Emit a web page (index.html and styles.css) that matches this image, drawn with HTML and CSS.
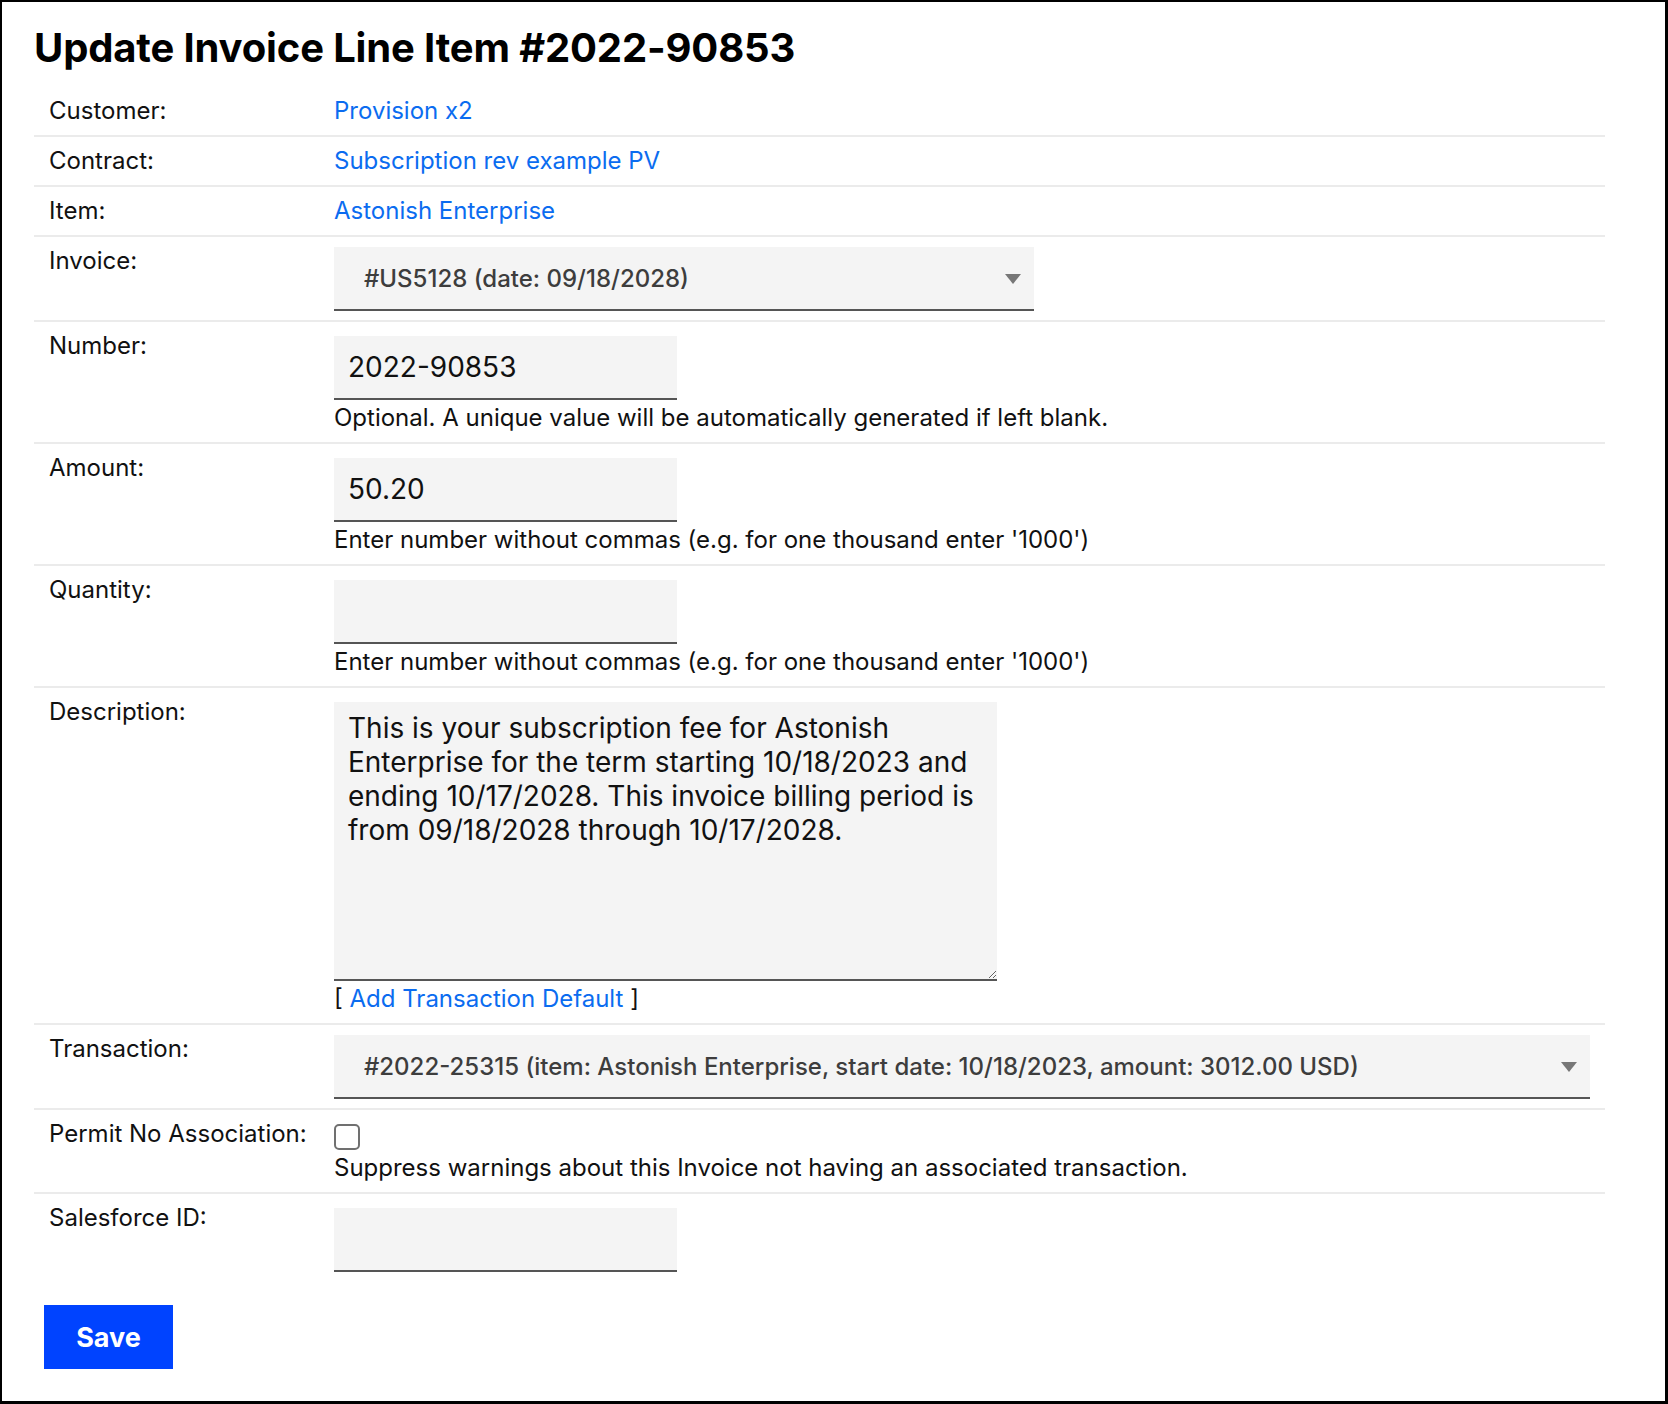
FILE: index.html
```html
<!DOCTYPE html>
<html lang="en">
<head>
    <meta charset="UTF-8">
    <meta name="viewport" content="width=device-width, initial-scale=1.0">
    <title>Update Invoice Line Item #2022-90853</title>
    <link rel="stylesheet" href="styles.css">
</head>
<body>
    <div class="page">
        <h1>Update Invoice Line Item #2022-90853</h1>

        <form class="edit-form">
            <div class="form-row">
                <div class="form-label">Customer:</div>
                <div class="form-value"><a href="#">Provision x2</a></div>
            </div>
            <div class="form-row">
                <div class="form-label">Contract:</div>
                <div class="form-value"><a href="#">Subscription rev example PV</a></div>
            </div>
            <div class="form-row">
                <div class="form-label">Item:</div>
                <div class="form-value"><a href="#">Astonish Enterprise</a></div>
            </div>
            <div class="form-row">
                <div class="form-label">Invoice:</div>
                <div class="form-value">
                    <div class="select-wrap select-invoice">
                        <select name="invoice">
                            <option>#US5128 (date: 09/18/2028)</option>
                        </select>
                    </div>
                </div>
            </div>
            <div class="form-row">
                <div class="form-label">Number:</div>
                <div class="form-value">
                    <input class="text-input" type="text" name="number" value="2022-90853">
                    <div class="help">Optional. A unique value will be automatically generated if left blank.</div>
                </div>
            </div>
            <div class="form-row">
                <div class="form-label">Amount:</div>
                <div class="form-value">
                    <input class="text-input" type="text" name="amount" value="50.20">
                    <div class="help">Enter number without commas (e.g. for one thousand enter '1000')</div>
                </div>
            </div>
            <div class="form-row">
                <div class="form-label">Quantity:</div>
                <div class="form-value">
                    <input class="text-input" type="text" name="quantity" value="">
                    <div class="help">Enter number without commas (e.g. for one thousand enter '1000')</div>
                </div>
            </div>
            <div class="form-row">
                <div class="form-label">Description:</div>
                <div class="form-value">
                    <textarea class="text-area" name="description">This is your subscription fee for Astonish Enterprise for the term starting 10/18/2023 and ending 10/17/2028. This invoice billing period is from 09/18/2028 through 10/17/2028.</textarea>
                    <div class="help">[ <a href="#">Add Transaction Default</a> ]</div>
                </div>
            </div>
            <div class="form-row">
                <div class="form-label">Transaction:</div>
                <div class="form-value">
                    <div class="select-wrap select-full">
                        <select name="transaction">
                            <option>#2022-25315 (item: Astonish Enterprise, start date: 10/18/2023, amount: 3012.00 USD)</option>
                        </select>
                    </div>
                </div>
            </div>
            <div class="form-row">
                <div class="form-label">Permit No Association:</div>
                <div class="form-value">
                    <input class="check" type="checkbox" name="permit_no_association">
                    <div class="help">Suppress warnings about this Invoice not having an associated transaction.</div>
                </div>
            </div>
            <div class="form-row last">
                <div class="form-label">Salesforce ID:</div>
                <div class="form-value">
                    <input class="text-input" type="text" name="salesforce_id" value="">
                </div>
            </div>

            <button class="save-btn" type="submit">Save</button>
        </form>
    </div>
</body>
</html>
```

FILE: styles.css
```css
html, body {
    margin: 0;
    padding: 0;
}

body {
    font-family: Inter, "Noto Sans", Arial, sans-serif;
    color: #111;
    background: #fff;
}

.page {
    box-sizing: border-box;
    width: 1668px;
    min-height: 1404px;
    border: 2px solid #000;
    border-right-width: 3px;
    border-bottom-width: 3px;
    padding: 21px 0 0 32px;
}

h1 {
    margin: 0 0 14px;
    font-size: 40px;
    font-weight: 700;
    line-height: 50px;
    color: #000;
    letter-spacing: -0.15px;
}

.edit-form {
    width: 1571px;
}

.form-row {
    display: grid;
    grid-template-columns: 285px 1fr;
    padding: 6px 15px;
    border-bottom: 2px solid #ebebeb;
    font-size: 24px;
    line-height: 36px;
}

.form-row.last {
    border-bottom: none;
}

.form-label {
    color: #111;
}

.form-value a {
    color: #0b6cf0;
    text-decoration: none;
}

/* selects */
.select-wrap {
    position: relative;
    margin: 4px 0 3px;
}

.select-invoice {
    width: 700px;
}

.select-full {
    width: 100%;
}

.select-wrap select {
    appearance: none;
    -webkit-appearance: none;
    box-sizing: border-box;
    display: block;
    width: 100%;
    height: 64px;
    padding: 0 50px 0 30px;
    border: none;
    border-bottom: 2px solid #555;
    border-radius: 0;
    background: #f4f4f4;
    font-family: inherit;
    font-size: 24px;
    font-weight: 500;
    color: #3d3d3d;
    outline: none;
}

.select-wrap::after {
    content: "";
    position: absolute;
    right: 13px;
    top: 27px;
    border-left: 8px solid transparent;
    border-right: 8px solid transparent;
    border-top: 10px solid #777;
    pointer-events: none;
}

/* text inputs */
.text-input {
    box-sizing: border-box;
    display: block;
    width: 343px;
    height: 64px;
    margin-top: 8px;
    padding: 0 14px;
    border: none;
    border-bottom: 2px solid #555;
    border-radius: 0;
    background: #f4f4f4;
    font-family: inherit;
    font-size: 28px;
    color: #111;
    outline: none;
}

.text-area {
    box-sizing: border-box;
    display: block;
    width: 663px;
    height: 279px;
    margin-top: 8px;
    padding: 9px 14px;
    border: none;
    border-bottom: 2px solid #555;
    border-radius: 0;
    background: #f4f4f4;
    font-family: inherit;
    font-size: 28px;
    line-height: 34px;
    color: #111;
    resize: both;
    outline: none;
}

.help {
    color: #111;
}

.check {
    appearance: none;
    -webkit-appearance: none;
    display: block;
    box-sizing: border-box;
    width: 26px;
    height: 26px;
    margin: 8px 0 0;
    border: 2px solid #707070;
    border-radius: 5px;
    background: #fff;
}

.save-btn {
    display: block;
    margin: 27px 0 0 10px;
    width: 129px;
    height: 64px;
    border: none;
    background: #0043ff;
    color: #fff;
    font-family: inherit;
    font-size: 27px;
    font-weight: 700;
    cursor: pointer;
}
```
